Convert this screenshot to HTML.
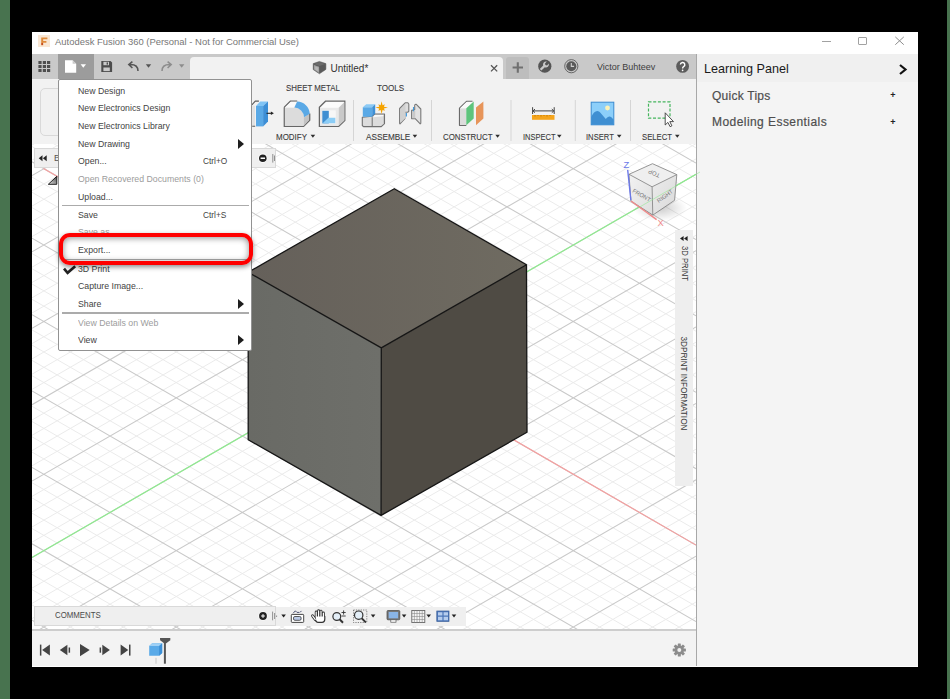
<!DOCTYPE html>
<html><head><meta charset="utf-8">
<style>
*{box-sizing:border-box;margin:0;padding:0}
html,body{width:950px;height:699px;overflow:hidden;background:#000;font-family:"Liberation Sans",sans-serif}
.a{position:absolute}
.t{position:absolute;white-space:nowrap;line-height:1}
.mi{position:absolute;left:78px;font-size:9.5px;color:#434343;white-space:nowrap;line-height:9.5px;transform:scaleX(.92);transform-origin:0 0}
.dis{color:#9c9c9c}
.sc{position:absolute;left:203px;font-size:9.5px;color:#434343;white-space:nowrap;line-height:9.5px;transform:scaleX(.875);transform-origin:0 0}
.sep{position:absolute;left:62px;width:187px;height:1.6px;background:#ababab}
.arr{position:absolute;left:238px;width:0;height:0;border-top:5px solid transparent;border-bottom:5px solid transparent;border-left:6px solid #1e1e1e}
.rl{position:absolute;font-size:9px;color:#3a3a3a;-webkit-text-stroke:0.1px #3a3a3a;white-space:nowrap;line-height:1;transform-origin:0 0}
.vsep{position:absolute;top:100px;width:1px;height:40px;background:#d4d4d4}
</style></head><body>
<div class="a" style="left:0;top:0;width:10px;height:699px;background:#48734f"></div>
<div class="a" style="left:947px;top:0;width:3px;height:699px;background:#48734f"></div>
<!-- window -->
<div class="a" style="left:32px;top:32px;width:886px;height:635px;background:#fff"></div>
<!-- title bar -->
<svg class="a" style="left:38px;top:35px" width="12" height="12" viewBox="0 0 12 12">
 <rect x="0" y="0" width="12" height="12" fill="#f9e7d4"/>
 <path d="M3.2 2.4H9.4V4.2H5.2V6H8.4V7.7H5.2V10.2H3.2Z" fill="#e08c3c"/>
 <circle cx="4.2" cy="9" r="0.9" fill="#c0401f"/>
</svg>
<div class="t" style="left:55px;top:37px;font-size:9.45px;color:#777">Autodesk Fusion 360 (Personal - Not for Commercial Use)</div>
<div class="a" style="left:822px;top:41px;width:9px;height:1px;background:#a2a2a2"></div>
<div class="a" style="left:858px;top:37px;width:8.5px;height:8px;border:1px solid #a2a2a2;border-radius:1px"></div>
<svg class="a" style="left:894px;top:36px" width="11" height="10"><path d="M1.3 0.9L9.8 8.7M9.8 0.9L1.3 8.7" stroke="#8e8e8e" stroke-width="1"/></svg>
<!-- quick access toolbar -->
<div class="a" style="left:32px;top:54px;width:664px;height:25px;background:#c9c9c9"></div>
<div class="a" style="left:58px;top:54px;width:36px;height:25px;background:#9c9c9c"></div>
<div class="a" style="left:190px;top:57px;width:313px;height:22px;background:#f2f2f2;border-radius:4px 4px 0 0"></div>
<div class="a" style="left:506px;top:57px;width:23px;height:22px;background:#bdbdbd;border-radius:3px 3px 0 0"></div>
<!-- ribbon -->
<div class="a" style="left:32px;top:79px;width:664px;height:66px;background:#f2f2f2;border-bottom:1px solid #e0e0e0"></div>
<!-- viewport bg -->
<div class="a" style="left:32px;top:144px;width:664px;height:486px;background:#fff"></div>
<!-- timeline -->
<div class="a" style="left:32px;top:629px;width:664px;height:37px;background:#f3f3f3;border-top:2px solid #cdcdcd"></div>
<!-- right panel -->
<div class="a" style="left:696px;top:54px;width:222px;height:612px;background:#f4f4f4;border-left:1px solid #a8a8a8"></div>
<div class="a" style="left:697px;top:54px;width:221px;height:28px;background:#f0f0f0"></div>
<div class="t" style="left:704px;top:62.6px;font-size:12.6px;color:#1a1a1a">Learning Panel</div>
<svg class="a" style="left:898px;top:64px" width="10" height="11"><path d="M2 1L7.5 5.5L2 10" stroke="#111" stroke-width="2.2" fill="none"/></svg>
<div class="t" style="left:712px;top:89.6px;font-size:12px;color:#4e4e4e;letter-spacing:0.25px;-webkit-text-stroke:0.2px #4e4e4e">Quick Tips</div>
<div class="t" style="left:890.3px;top:91.2px;font-size:9px;font-weight:bold;color:#222">+</div>
<div class="t" style="left:712px;top:116.4px;font-size:12px;color:#4e4e4e;letter-spacing:0.44px;-webkit-text-stroke:0.2px #4e4e4e">Modeling Essentials</div>
<div class="t" style="left:890.3px;top:117.7px;font-size:9px;font-weight:bold;color:#222">+</div>
<svg class="a" style="left:32px;top:144px" width="664" height="485" viewBox="32 144 664 485">
<path d="M32 145.0L696 -238.4M32 160.2L696 -223.1M32 190.8L696 -192.6M32 206.1L696 -177.3M32 221.4L696 -162.0M32 236.6L696 -146.7M32 267.2L696 -116.2M32 282.5L696 -100.9M32 297.8L696 -85.6M32 313.0L696 -70.3M32 343.6L696 -39.8M32 358.9L696 -24.5M32 374.2L696 -9.2M32 389.4L696 6.1M32 420.0L696 36.6M32 435.3L696 51.9M32 450.6L696 67.2M32 465.8L696 82.5M32 496.4L696 113.0M32 511.7L696 128.3M32 527.0L696 143.6M32 542.2L696 158.9M32 572.8L696 189.4M32 588.1L696 204.7M32 603.4L696 220.0M32 618.6L696 235.3M32 649.2L696 265.8M32 664.5L696 281.1M32 679.8L696 296.4M32 695.0L696 311.7M32 725.6L696 342.2M32 740.9L696 357.5M32 756.2L696 372.8M32 771.4L696 388.1M32 802.0L696 418.6M32 817.3L696 433.9M32 832.6L696 449.2M32 847.8L696 464.5M32 878.4L696 495.0M32 893.7L696 510.3M32 909.0L696 525.6M32 924.2L696 540.9M32 954.8L696 571.4M32 970.1L696 586.7M32 985.4L696 602.0M32 1000.6L696 617.3M32 -235.5L696 147.9M32 -204.9L696 178.4M32 -189.7L696 193.7M32 -174.4L696 209.0M32 -159.1L696 224.3M32 -128.5L696 254.8M32 -113.3L696 270.1M32 -98.0L696 285.4M32 -82.7L696 300.7M32 -52.1L696 331.2M32 -36.9L696 346.5M32 -21.6L696 361.8M32 -6.3L696 377.1M32 24.3L696 407.6M32 39.5L696 422.9M32 54.8L696 438.2M32 70.1L696 453.5M32 100.7L696 484.0M32 115.9L696 499.3M32 131.2L696 514.6M32 146.5L696 529.9M32 177.1L696 560.4M32 192.3L696 575.7M32 207.6L696 591.0M32 222.9L696 606.3M32 253.5L696 636.8M32 268.7L696 652.1M32 284.0L696 667.4M32 299.3L696 682.7M32 329.9L696 713.2M32 345.1L696 728.5M32 360.4L696 743.8M32 375.7L696 759.1M32 406.3L696 789.6M32 421.5L696 804.9M32 436.8L696 820.2M32 452.1L696 835.5M32 482.7L696 866.0M32 497.9L696 881.3M32 513.2L696 896.6M32 528.5L696 911.9M32 559.1L696 942.4M32 574.3L696 957.7M32 589.6L696 973.0M32 604.9L696 988.3" stroke="#ebebeb" stroke-width="1" fill="none"/>
<path d="M32 175.5L696 -207.8M32 251.9L696 -131.4M32 328.3L696 -55.0M32 404.7L696 21.4M32 481.1L696 97.8M32 557.5L696 174.2M32 633.9L696 250.6M32 710.3L696 327.0M32 786.7L696 403.4M32 863.1L696 479.8M32 939.5L696 556.2M32 -220.2L696 163.1M32 -143.8L696 239.5M32 -67.4L696 315.9M32 9.0L696 392.3M32 85.4L696 468.7M32 161.8L696 545.1M32 238.2L696 621.5M32 314.6L696 697.9M32 391.0L696 774.3M32 467.4L696 850.7M32 543.8L696 927.1M32 620.2L696 1003.5" stroke="#c9c9c9" stroke-width="1.05" fill="none"/>
<path d="M32 557.5L696 174.2" stroke="#8fea8f" stroke-width="1.2" fill="none"/>
<path d="M43.5 168.4L696 545.1" stroke="#f4a0a0" stroke-width="1.2" fill="none"/>
<defs><linearGradient id="trg" x1="0" y1="1" x2="1" y2="0"><stop offset="0" stop-color="#e8e8e8"/><stop offset="1" stop-color="#444"/></linearGradient></defs>
<path d="M48.3 184.3L56.8 176.3V184.3Z" fill="url(#trg)" stroke="#222" stroke-width="1" stroke-linejoin="round"/>
<defs><linearGradient id="topg" gradientUnits="userSpaceOnUse" x1="248" y1="0" x2="527" y2="0"><stop offset="0" stop-color="#65605a"/><stop offset="1" stop-color="#6f6b61"/></linearGradient><linearGradient id="leftg" gradientUnits="userSpaceOnUse" x1="248" y1="0" x2="381" y2="0"><stop offset="0" stop-color="#696a65"/><stop offset="1" stop-color="#6e6f6a"/></linearGradient></defs>
<polygon points="394.3,188.7 526.5,264.7 381.3,347.9 248.2,272.2" fill="url(#topg)"/>
<polygon points="248.2,272.2 381.3,347.9 381.1,515.4 248.2,439.7" fill="url(#leftg)"/>
<polygon points="381.3,347.9 526.5,264.7 527,432.2 381.1,515.4" fill="#4f4b44"/>
<path d="M394.3 188.7L526.5 264.7L527 432.2L381.1 515.4L248.2 439.7L248.2 272.2Z M248.2 272.2L381.3 347.9L526.5 264.7 M381.3 347.9L381.1 515.4" stroke="#151515" stroke-width="1.3" fill="none" stroke-linejoin="round"/>
</svg>
<div class="a" style="left:40px;top:88px;width:40px;height:48px;border:1px solid #d9d9d9;border-radius:5px;background:#f1f1f1"></div>
<div class="rl" style="left:286.2px;top:83.9px;transform:scaleX(0.875)">SHEET METAL</div>
<div class="rl" style="left:376.5px;top:83.9px;transform:scaleX(0.898)">TOOLS</div>
<div class="rl" style="left:276.3px;top:132.7px;transform:scaleX(0.886)">MODIFY</div>
<div class="rl" style="left:366px;top:132.7px;transform:scaleX(0.913)">ASSEMBLE</div>
<div class="rl" style="left:442.6px;top:132.7px;transform:scaleX(0.876)">CONSTRUCT</div>
<div class="rl" style="left:522.5px;top:132.7px;transform:scaleX(0.833)">INSPECT</div>
<div class="rl" style="left:585.8px;top:132.7px;transform:scaleX(0.848)">INSERT</div>
<div class="rl" style="left:642px;top:132.7px;transform:scaleX(0.857)">SELECT</div>
<svg class="a" style="left:0;top:0" width="700" height="145" viewBox="0 0 700 145">
 <g fill="#2e2e2e">
  <path d="M310.6 134.8h4.6l-2.3 3z"/>
  <path d="M412.6 134.8h4.6l-2.3 3z"/>
  <path d="M495.3 134.8h4.6l-2.3 3z"/>
  <path d="M557.0 134.8h4.6l-2.3 3z"/>
  <path d="M616.9 134.8h4.6l-2.3 3z"/>
  <path d="M675.0 134.8h4.6l-2.3 3z"/>
 </g>
 <g fill="#d5d5d5">
  <rect x="353" y="100" width="1" height="41"/>
  <rect x="431" y="100" width="1" height="41"/>
  <rect x="510.5" y="100" width="1" height="41"/>
  <rect x="574.8" y="100" width="1" height="41"/>
  <rect x="630" y="100" width="1" height="41"/>
 </g>
 <!-- press pull partial -->
 <path d="M252.2 105.7h2.8v20.5h-2.8z" fill="#e2e2e2"/>
 <path d="M251.9 104.8l3.4-3.7h3.6M252.2 126.2h3" fill="none" stroke="#5c5c5c" stroke-width="1.1"/>
 <path d="M256 106h7.1v20.4h-7.1z" fill="#5aa9e6"/>
 <path d="M256 106l4.2-4.4h7.8l-4.9 4.4z" fill="#80c4f5"/>
 <path d="M263.1 106l4.9-4.4v19.9l-4.9 4.9z" fill="#3d8fd6"/>
 <path d="M266.5 113.3h5.5" stroke="#222" stroke-width="1.1"/>
 <path d="M270.9 111.6l3 1.7-3 1.7z" fill="#222"/>
 <!-- fillet -->
 <path d="M284.3 107.3l6.1-6.1h6.8 M309.7 113.4v6.8l-6.1 6.1h-19.3v-19" fill="none" stroke="#666" stroke-width="1.3"/>
 <path d="M284.9 107.6h9.4a10 10 0 0 1 9.7 9.7v8.4h-19.1z" fill="#dcdcdc"/>
 <path d="M290.7 101.8h6.5l-2.9 5.8h-9.4z" fill="#fafafa"/>
 <path d="M303.9 117.4l5.2-3.6v6.3l-5.2 5.6z" fill="#c3c3c3"/>
 <path d="M297.2 101.5a13 13 0 0 1 12.6 12.2l-5.8 3.6a10 10 0 0 0-9.7-9.7z" fill="#5aa9e6"/>
 <!-- shell -->
 <path d="M319.4 107.3l6.1-6.1h19.3v19.3l-6.1 5.8h-19.3z" fill="#fbfbfb" stroke="#666" stroke-width="1.3"/>
 <path d="M320 107.8h18.7v18h-18.7z" fill="#e9e9e9"/>
 <path d="M338.7 107.8l5.7-5.9v18.6l-5.7 5.3z" fill="#c9c9c9"/>
 <rect x="322.3" y="110.3" width="13.5" height="13.2" fill="#f7f7f7"/>
 <rect x="322.3" y="110.8" width="6.5" height="12.6" fill="#3f8fd2"/>
 <path d="M322.6 123.3l5.8-5.6h6.9v5.6z" fill="#8ccdf6"/>
 <!-- new component -->
 <path d="M362.3 117.2v8.3l1.2 1.1h17.8l3.2-3v-9.6h-9.8l-2.5 2.2z" fill="#dcdcdc" stroke="#707070" stroke-width="1.1" stroke-linejoin="round"/>
 <path d="M373.2 117.2l1.4-2.3h9.3l-1.2 1.3z" fill="#f8f8f8"/>
 <path d="M383 116.2l.9-1.2v8.4l-.9 1z" fill="#c4c4c4"/>
 <path d="M372.2 117.2v9.2" stroke="#707070" stroke-width="1"/>
 <path d="M362.8 107.2h9.4v9.6h-9.4z" fill="#5aa9e6"/>
 <path d="M362.8 107.2l3.4-3h9l-3 3z" fill="#8ccaf5"/>
 <path d="M372.2 107.2l3-3v9.4l-3 3.2z" fill="#3f90d6"/>
 <polygon points="381.60,101.20 382.56,105.29 384.85,104.35 383.91,106.64 388.00,107.60 383.91,108.56 384.85,110.85 382.56,109.91 381.60,114.00 380.64,109.91 378.35,110.85 379.29,108.56 375.20,107.60 379.29,106.64 378.35,104.35 380.64,105.29" fill="#f5a300"/>
 <!-- joint -->
 <path d="M399.6 123.3V108.5l5.8-5.8h2.3l1.1 1.3v7.3l-1.1.9h-2.8v6.4l-4.9 5.2z" fill="#dedede" stroke="#7a7a7a" stroke-width="1.1" stroke-linejoin="round"/>
 <path d="M400.5 109l5-5v14l-5 4.8z" fill="#d0d0d0"/>
 <path d="M411.6 110.4v8.2h3.6l5 5.2.6-.5V109l-4.5-4.6h-.8l-.8.5v4.9z" fill="#e2e2e2" stroke="#7a7a7a" stroke-width="1.1" stroke-linejoin="round"/>
 <path d="M412.2 111h3v7.4h-3z" fill="#c9c9c9"/>
 <path d="M406.4 113v3.5 M413.5 107v4.3" stroke="#3d9ae0" stroke-width="1.1"/>
 <!-- construct -->
 <path d="M466.3 125.3h-6.8v-17l7-6.9h6" fill="none" stroke="#6a6a6a" stroke-width="1.2" stroke-linejoin="round"/>
 <path d="M460 108.3h6.3v16.7h-6.3z" fill="#dcdcdc"/>
 <path d="M460 108.3l6.8-6.5h6.6l-7 6.5z" fill="#fafafa"/>
 <path d="M466.3 108.2l7.4-6.6v16.8l-7.4 6.9z" fill="#5ec47c"/>
 <path d="M476 107.6l7.4-6v16.8l-7.4 6.9z" fill="#e7955a"/>
 <!-- inspect -->
 <path d="M532.6 107.2v6.8M554.2 107.2v6.8M533 110.9h20.8M535 109.1l-2 1.8 2 1.8M551.8 109.1l2 1.8-2 1.8" stroke="#444" stroke-width="1" fill="none"/>
 <rect x="532" y="115" width="22.5" height="4.8" fill="#f5a51c"/>
 <path d="M535 115v1.5M538 115v1M541 115v1.5M544 115v1M547 115v1.5M550 115v1" stroke="#b86e00" stroke-width=".8"/>
 <!-- insert -->
 <rect x="591.2" y="102.2" width="22.6" height="22.6" fill="#8ccffa" stroke="#3a8ad0" stroke-width="1"/>
 <path d="M591.2 124.8V117C593 113 595 111 597.3 111C600 111 603 116 605.8 119C607 117.5 608.5 116.3 609.8 116.5C611.5 117 612.5 118.5 613.6 119.5V124.8Z" fill="#3f8fd2"/>
 <circle cx="607.5" cy="108" r="2.4" fill="#fbf2b8"/>
 <!-- select -->
 <rect x="648.5" y="101.9" width="21.5" height="16.2" fill="none" stroke="#45b55e" stroke-width="1.2" stroke-dasharray="3 1.7"/>
 <path d="M665.2 112.8v12.2l2.7-2.6 2.2 4.3 1.8-.9-2.1-4.2h3.7z" fill="#fff" stroke="#333" stroke-width=".85"/>
</svg>
<svg class="a" style="left:0;top:0" width="700" height="82" viewBox="0 0 700 82">
 <g fill="#4e4e4e">
  <rect x="38.4" y="61" width="3.2" height="3"/><rect x="42.8" y="61" width="3.2" height="3"/><rect x="47" y="61" width="3.2" height="3"/>
  <rect x="38.4" y="65" width="3.2" height="3"/><rect x="42.8" y="65" width="3.2" height="3"/><rect x="47" y="65" width="3.2" height="3"/>
  <rect x="38.4" y="69" width="3.2" height="3"/><rect x="42.8" y="69" width="3.2" height="3"/><rect x="47" y="69" width="3.2" height="3"/>
 </g>
 <path d="M65 60.2h7.6l3.6 3.6v9h-11.2z" fill="#fff"/>
 <path d="M72.6 60.2v3.6h3.6z" fill="#c8c8c8"/>
 <path d="M80.6 64.2h5.4l-2.7 3.5z" fill="#fff"/>
 <path d="M101.3 61h9.2l1.6 1.6v9.4h-10.8z" fill="#4c4c4c"/>
 <rect x="103.4" y="61.8" width="5.6" height="3.4" fill="#c9c9c9"/><rect x="106.6" y="62.4" width="1.4" height="2.2" fill="#4c4c4c"/>
 <rect x="103.4" y="67.5" width="6.4" height="3.6" fill="#c9c9c9"/>
 <path d="M138 71c0-4.2-2.5-6.5-7.5-6.5h-1.6M132.4 61.6l-3.6 3 3.6 3.4" fill="none" stroke="#555" stroke-width="1.55"/>
 <path d="M145.8 64.2h5.4l-2.7 3.5z" fill="#555"/>
 <path d="M162 71c0-4.2 2.5-6.5 7.5-6.5h1.6M167.6 61.6l3.6 3-3.6 3.4" fill="none" stroke="#8d8d8d" stroke-width="1.55"/>
 <path d="M179 64.2h5.4l-2.7 3.5z" fill="#8d8d8d"/>
 <!-- tab cube icon -->
 <path d="M313.2 63.6L319.4 61.4L325.9 63.6V69.4L319.4 73.8L313.2 69.6Z" fill="#5a5a5a" stroke="#5a5a5a" stroke-width=".5" stroke-linejoin="round"/>
 <path d="M313.5 63.9L319.4 61.9L325.5 63.9L319.4 66.1Z" fill="#6c6c6c"/>
 <path d="M314 64.9L319.1 66.8V72.9L314 69.4Z" fill="#a2a2a2"/>
 <path d="M315.2 66.4L318.2 67.6V71.3L315.2 69.4Z" fill="#b9b9b9"/>
 <path d="M491 65.2l6.2 6.2M497.2 65.2L491 71.4" stroke="#555" stroke-width="1.3"/>
 <path d="M517.8 62.3v10.4M512.6 67.5h10.4" stroke="#707070" stroke-width="2.1"/>
 <!-- wrench -->
 <circle cx="544.8" cy="66.2" r="6.6" fill="#555"/>
 <path d="M546.8 61.6a3 3 0 0 0-3.6 4l-3.4 3.4 1.6 1.6 3.4-3.4a3 3 0 0 0 4-3.6l-1.8 1.8-1.6-.3-.4-1.5z" fill="#c9c9c9"/>
 <!-- clock -->
 <circle cx="571.3" cy="66.2" r="6.6" fill="none" stroke="#5a5a5a" stroke-width=".9"/>
 <circle cx="571.3" cy="66.2" r="5" fill="#5a5a5a"/>
 <path d="M571.3 63v3.4h2.8" stroke="#d0d0d0" stroke-width="1.1" fill="none"/>
 <!-- help -->
 <circle cx="682.6" cy="66.4" r="6.4" fill="#5c5c5c"/>
 <path d="M680.4 64.6a2.2 2.2 0 1 1 3.2 2c-.9.5-1 .9-1 1.8" stroke="#fff" stroke-width="1.4" fill="none"/>
 <circle cx="682.6" cy="70.3" r=".85" fill="#fff"/>
</svg>
<div class="t" style="left:330.5px;top:63.5px;font-size:10px;color:#333">Untitled*</div>
<div class="t" style="left:597px;top:62.6px;font-size:9px;color:#3e3e3e">Victor Buhteev</div>
<!-- browser panel -->
<div class="a" style="left:34px;top:148px;width:242px;height:20px;background:#efefef;border:1px solid #d9d9d9"></div>
<svg class="a" style="left:0;top:140px" width="300" height="40" viewBox="0 140 300 40">
 <path d="M42.5 155.2l-3.8 3 3.8 3zM46.7 155.2l-3.8 3 3.8 3z" fill="#222"/>
 <circle cx="262.8" cy="158.2" r="4.6" fill="#fff"/>
 <circle cx="262.8" cy="158.2" r="3.8" fill="#222"/>
 <rect x="260.6" y="157.5" width="4.4" height="1.5" fill="#fff"/>
 <path d="M272.8 154v8.6M274.5 155.5v5.5" stroke="#777" stroke-width=".8"/>
</svg>
<div class="t" style="left:54px;top:154px;font-size:9px;color:#555">B</div>
<!-- comments panel -->
<div class="a" style="left:34px;top:606px;width:242px;height:20px;background:#efefef;border:1px solid #d9d9d9"></div>
<div class="t" style="left:54.6px;top:611.2px;font-size:9.3px;color:#4a4a4a;transform:scaleX(.844);transform-origin:0 0">COMMENTS</div>
<!-- nav bar -->
<div class="a" style="left:276px;top:607px;width:190px;height:19px;background:#efefef"></div>
<svg class="a" style="left:0;top:600px" width="470" height="32" viewBox="0 600 470 32">
 <circle cx="263" cy="616" r="4.6" fill="#fff"/>
 <circle cx="263" cy="616" r="3.9" fill="#222"/>
 <path d="M261.1 616h3.8M263 614.1v3.8" stroke="#fff" stroke-width="1"/>
 <path d="M272.6 611.6v8.7M274.6 613v6M276.6 615.5v1.5" stroke="#777" stroke-width=".8"/>
 <path d="M281.3 614.5h4.6l-2.3 3z" fill="#222"/>
 <!-- camera/orbit -->
 <rect x="291.3" y="614.4" width="12.4" height="8" rx=".8" fill="#fff" stroke="#444" stroke-width="1"/>
 <rect x="293.5" y="616.5" width="7.6" height="3.8" rx="1.4" fill="#b9c9e6" stroke="#333" stroke-width=".8"/>
 <path d="M293.2 613.2l2.2-2.4 1 1.2M296.8 612.4h2.6M300.2 612.3l1.2-1.4" stroke="#4a5070" stroke-width="1" fill="none"/>
 <!-- hand -->
 <g stroke-linecap="round" fill="none">
  <path d="M316.2 617V612M318.6 616.5V610.8M321 616.5V611.2M323.4 617.5V613M312.6 615.8L315.2 619.4" stroke="#333" stroke-width="2.9"/>
  <path d="M315.3 616.5h9.4v2.6c0 1.8-1.2 3.3-2.8 3.3h-3.6c-1.4 0-2-.6-3-2z" fill="#333" stroke="#333" stroke-width="1.4" stroke-linejoin="round"/>
  <path d="M316.2 617V612M318.6 616.5V610.8M321 616.5V611.2M323.4 617.5V613M312.6 615.8L315.2 619.4" stroke="#fff" stroke-width="1.2"/>
  <path d="M315.8 616.6h8.4v2.5c0 1.5-.9 2.7-2.3 2.7h-3.3c-1.1 0-1.6-.5-2.4-1.6z" fill="#fff"/>
 </g>
 <!-- zoom -->
 <circle cx="336.8" cy="616.5" r="3.9" fill="#e3eef7" stroke="#333" stroke-width="1.2"/>
 <path d="M339.6 619.3l3.4 3.4" stroke="#333" stroke-width="2"/>
 <path d="M341.5 612.5h4.2M343.6 610.4v4.2M341.5 616h4.2" stroke="#333" stroke-width=".9"/>
 <!-- fit -->
 <rect x="353.5" y="610" width="13.3" height="12.5" fill="none" stroke="#666" stroke-width=".8" stroke-dasharray="1.2 1.2"/>
 <circle cx="358.7" cy="615.2" r="4.2" fill="#e3eef7" stroke="#333" stroke-width="1.2"/>
 <path d="M361.8 618.4l4 4" stroke="#333" stroke-width="2"/>
 <path d="M370.8 614.5h4.6l-2.3 3z" fill="#222"/>
 <!-- display -->
 <rect x="387" y="610.5" width="12.8" height="9.3" rx="1" fill="#777" stroke="#444" stroke-width=".7"/>
 <rect x="388.7" y="612" width="9.4" height="6.3" fill="#89b4e6"/>
 <rect x="390.8" y="619.8" width="5.2" height="2.4" fill="#fff" stroke="#555" stroke-width=".7"/>
 <path d="M401.8 614.5h4.6l-2.3 3z" fill="#222"/>
 <!-- grid -->
 <rect x="411.8" y="610.5" width="13" height="12" fill="#f4f4f4" stroke="#666" stroke-width=".9"/>
 <path d="M414.4 610.5v12M417 610.5v12M419.6 610.5v12M422.2 610.5v12M411.8 613.5h13M411.8 616.5h13M411.8 619.5h13" stroke="#8a8a8a" stroke-width=".6"/>
 <path d="M426.4 614.5h4.6l-2.3 3z" fill="#222"/>
 <!-- viewports -->
 <rect x="436.8" y="611" width="12.2" height="10.4" fill="#4c76b8" stroke="#3b5f99" stroke-width=".7"/>
 <path d="M438 612.2h4.4v3.4h-4.4zM443.6 612.2h4.4v3.4h-4.4zM438 616.8h4.4v3.4h-4.4zM443.6 616.8h4.4v3.4h-4.4z" fill="#b6cdee"/>
 <path d="M451.7 614.5h4.6l-2.3 3z" fill="#222"/>
</svg>
<!-- 3D print strip -->
<div class="a" style="left:675px;top:230px;width:18px;height:256px;background:#eeeeee"></div>
<svg class="a" style="left:670px;top:230px" width="30" height="20" viewBox="670 230 30 20">
 <path d="M680 238.5l3.6-2.5v5zM684 238.5l3.6-2.5v5z" fill="#1e1e1e"/>
</svg>
<div class="t" style="left:663.5px;top:258.7px;width:41px;height:9px;font-size:9px;color:#3a3a3a;transform:rotate(90deg) scaleX(.855);transform-origin:50% 50%">3D PRINT</div>
<div class="t" style="left:632.4px;top:378.5px;width:103.2px;height:9px;font-size:9px;color:#3a3a3a;transform:rotate(90deg) scaleX(.91);transform-origin:50% 50%">3DPRINT INFORMATION</div>
<!-- view cube -->
<svg class="a" style="left:600px;top:145px" width="100" height="90" viewBox="600 145 100 90">
 <defs><radialGradient id="vcs" cx="0.5" cy="0.5" r="0.5"><stop offset="0" stop-color="#000" stop-opacity=".2"/><stop offset="1" stop-color="#000" stop-opacity="0"/></radialGradient>
 <linearGradient id="vcf" x1="0" y1="0" x2="1" y2="1"><stop offset="0" stop-color="#f2f2f2"/><stop offset="1" stop-color="#dedede"/></linearGradient>
 <linearGradient id="vcr" x1="0" y1="0" x2="1" y2="1"><stop offset="0" stop-color="#ececec"/><stop offset="1" stop-color="#d9d9d9"/></linearGradient></defs>
 <ellipse cx="660" cy="208" rx="27" ry="13" fill="url(#vcs)"/>
 <polygon points="652.5,163.7 676.8,174.6 652.1,186.8 629,174.3" fill="#efefef"/>
 <polygon points="629,174.3 652.1,186.8 652.8,215.1 630.9,201" fill="url(#vcf)"/>
 <polygon points="652.1,186.8 676.8,174.6 674.6,200.3 652.8,215.1" fill="url(#vcr)"/>
 <path d="M652.5 163.7L676.8 174.6L674.6 200.3L652.8 215.1L630.9 201L629 174.3Z M629 174.3L652.1 186.8L676.8 174.6 M652.1 186.8L652.8 215.1" stroke="#7c7c7c" stroke-width=".8" fill="none" stroke-linejoin="round"/>
 <path d="M638 208L700 172" stroke="#8fea8f" stroke-width="1" opacity=".55"/>
 <path d="M627.7 170l3.2 30.3" stroke="#6b78e8" stroke-width="1.4"/>
 <path d="M631 201l25.6 18.6" stroke="#f08a8a" stroke-width="1.4"/>
 <text x="623.6" y="168.3" font-size="9.4" fill="#6b78e8" font-family="Liberation Sans">Z</text>
 <text x="657.6" y="226.2" font-size="9.4" fill="#f08a8a" font-family="Liberation Sans">X</text>
 <text transform="translate(632 192) rotate(30)" font-size="5.8" fill="#7a7a7a" font-family="Liberation Sans">FRONT</text>
 <text transform="translate(658.8 203) rotate(-36)" font-size="5.8" fill="#7a7a7a" font-family="Liberation Sans">RIGHT</text>
 <text transform="translate(660.5 174) rotate(203)" font-size="6" fill="#7a7a7a" font-family="Liberation Sans">TOP</text>
</svg>
<!-- timeline -->
<svg class="a" style="left:30px;top:632px" width="150" height="36" viewBox="30 632 150 36">
 <g fill="#444">
  <rect x="39.9" y="644.6" width="1.5" height="11"/><path d="M42.1 650l7.8-5.4v10.8z"/>
  <path d="M59.8 650l7.6-5.2v10.4z"/><rect x="68.6" y="647.5" width="1.5" height="5.2"/>
  <path d="M80 644.1l9.7 5.9-9.7 6.3z"/>
  <rect x="99.6" y="647.5" width="1.5" height="5.2"/><path d="M109.9 650l-7.6-5.2v10.4z"/>
  <path d="M128.3 650l-7.7-5.4v10.8z"/><rect x="129" y="644.6" width="1.5" height="11"/>
 </g>
 <path d="M149.2 646l3-2.8h10v9.8l-3 2.8h-10z" fill="#5aaae8"/>
 <path d="M149.2 646l3-2.8h10l-3 2.8z" fill="#9fd0f5"/>
 <path d="M159.2 646l3-2.8v9.8l-3 2.8z" fill="#3b8fd6"/>
 <rect x="155.6" y="657.8" width=".8" height="5.9" fill="#bbb"/>
 <path d="M160 638h10.3v2.2l-4 3h-2.2l-4-3z" fill="#555"/>
 <rect x="163.9" y="642" width="2" height="21.7" fill="#555"/>
</svg>
<svg class="a" style="left:670px;top:642px" width="18" height="18" viewBox="670 642 18 18">
 <g transform="translate(679.3 650)" fill="#8c8c8c">
  <circle r="4.6"/>
  <rect x="-1.5" y="-6.6" width="3" height="13.2" rx=".5"/>
  <rect x="-1.5" y="-6.6" width="3" height="13.2" rx=".5" transform="rotate(45)"/>
  <rect x="-1.5" y="-6.6" width="3" height="13.2" rx=".5" transform="rotate(90)"/>
  <rect x="-1.5" y="-6.6" width="3" height="13.2" rx=".5" transform="rotate(135)"/>
  <circle r="2" fill="#f0f0f0"/>
 </g>
</svg>
<!-- file menu -->
<div class="a" style="left:58px;top:79px;width:194px;height:272px;background:#fff;border:1px solid #929292;border-radius:2px"></div>
<div class="mi" style="top:86px">New Design</div>
<div class="mi" style="top:103.3px">New Electronics Design</div>
<div class="mi" style="top:120.9px">New Electronics Library</div>
<div class="mi" style="top:138.6px">New Drawing</div>
<div class="arr" style="top:138.5px"></div>
<div class="mi" style="top:156.3px">Open...</div>
<div class="sc" style="top:156.3px">Ctrl+O</div>
<div class="mi dis" style="top:174px">Open Recovered Documents (0)</div>
<div class="mi" style="top:191.7px">Upload...</div>
<div class="sep" style="top:204.6px"></div>
<div class="mi" style="top:210px">Save</div>
<div class="sc" style="top:210px">Ctrl+S</div>
<div class="mi dis" style="top:227.3px">Save as</div>
<div class="mi" style="top:245.1px">Export...</div>
<div class="sep" style="top:258.6px"></div>
<div class="mi" style="top:263.8px">3D Print</div>
<div class="mi" style="top:281.4px">Capture Image...</div>
<div class="mi" style="top:299.3px">Share</div>
<div class="arr" style="top:299.2px"></div>
<div class="sep" style="top:312.2px"></div>
<div class="mi dis" style="top:317.6px">View Details on Web</div>
<div class="mi" style="top:334.8px">View</div>
<div class="arr" style="top:334.7px"></div>
<svg class="a" style="left:60px;top:260px" width="20" height="18" viewBox="60 260 20 18"><path d="M64 268.6l3.6 4.2 7.6-6.6" stroke="#222" stroke-width="2.6" fill="none"/></svg>
<!-- red highlight -->
<div class="a" style="left:58.5px;top:232.5px;width:194px;height:32.5px;border:4.2px solid #ff0000;border-radius:11px;box-shadow:0 2px 5px rgba(0,0,0,.45), inset 0 1px 6px rgba(0,0,0,.45)"></div>
</body></html>
